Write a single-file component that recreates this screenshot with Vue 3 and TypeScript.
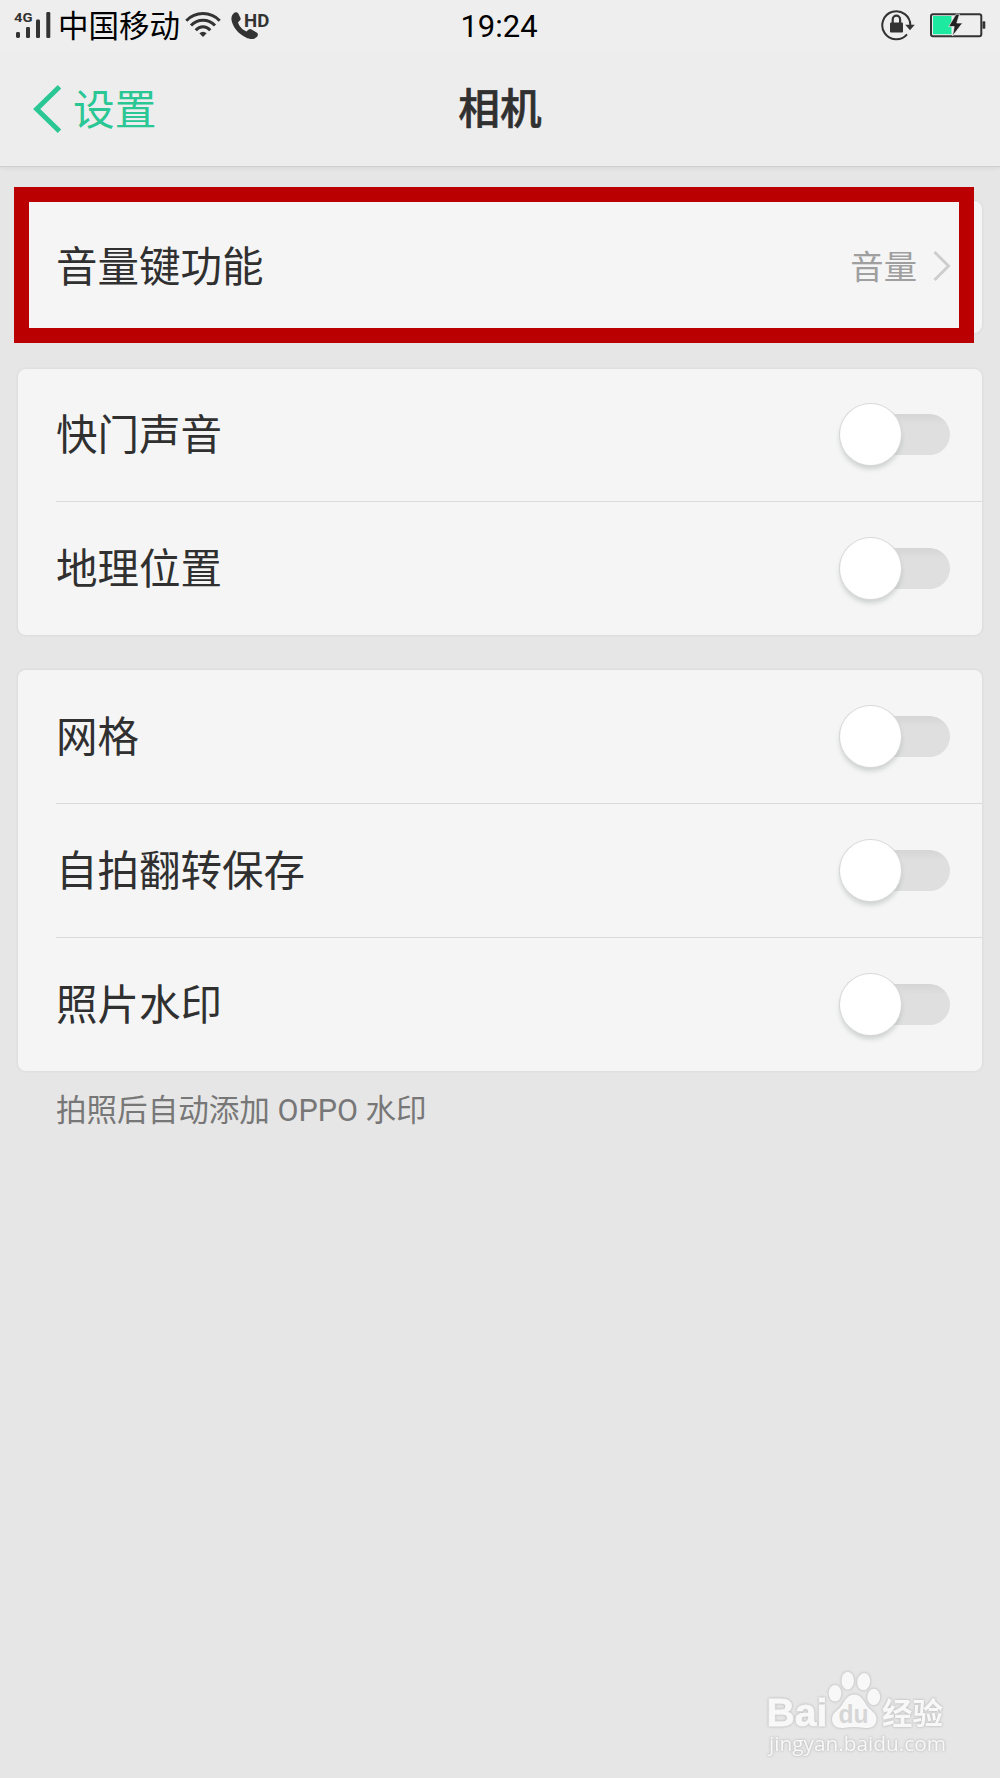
<script setup lang="ts">
interface SettingRow {
  label: string
  value?: string
  on?: boolean
}

const groups: SettingRow[][] = [
  [{ label: '音量键功能', value: '音量' }],
  [
    { label: '快门声音', on: false },
    { label: '地理位置', on: false },
  ],
  [
    { label: '网格', on: false },
    { label: '自拍翻转保存', on: false },
    { label: '照片水印', on: false },
  ],
]
</script>

<template>
  <div class="screen">
    <header class="top">
      <div class="status">
        <div class="status-left">
          <svg class="signal" width="38" height="28" viewBox="0 0 38 28">
            <text x="0" y="10" class="net" textLength="18.500" lengthAdjust="spacingAndGlyphs">4G</text>
            <g fill="#333">
              <rect x="2" y="20" width="4" height="6" rx="1.4" />
              <rect x="12" y="15" width="4" height="11" rx="1.2" />
              <rect x="22" y="7.5" width="4" height="18.500" rx="1.2" />
              <rect x="32.300" y="0" width="4" height="26" rx="1.2" />
            </g>
          </svg>
          <span class="carrier">中国移动</span>
          <svg class="wifi" width="36" height="26" viewBox="0 0 36 26">
            <g fill="none" stroke="#333" stroke-width="3">
              <path d="M1.300 8.700C10.500-.8 25.500-.8 34.700 8.700" />
              <path d="M6 13.600C12.500 6.500 23.500 6.500 30 13.600" />
              <path d="M10.700 18.200C15 13.700 21 13.700 25.300 18.200" />
            </g>
            <path d="M14.300 21.200Q18 18.200 21.700 21.200L18 25Z" fill="#333" />
          </svg>
          <svg class="call" width="40" height="28" viewBox="0 0 40 28">
            <path
              d="M2.300 1.700C4-.2 6-.2 7.300 1.400L9.600 6.300C10.200 7.700 8.300 9.200 7 10.300C8 14.500 11.500 18 15.700 19.500C16.800 18.200 18.500 16.700 20 17.200L26 20.700C27.500 21.800 27 23.700 25.400 25.300C22.500 28 18.500 27.200 15 25.500C7.500 22 2 15.500.6 8.500C.1 6 .6 3.400 2.300 1.700Z"
              fill="#333"
            />
            <text x="13" y="14.800" class="hd" textLength="25.300" lengthAdjust="spacingAndGlyphs">HD</text>
          </svg>
        </div>
        <span class="clock">19:24</span>
        <div class="status-right">
          <svg width="36" height="32" viewBox="0 0 36 32">
            <path d="M26 25.300A14 14 0 1 1 29.300 16.500" fill="none" stroke="#333" stroke-width="2" />
            <path d="M24.200 15.700H33.800L29 21.200Z" fill="#333" />
            <rect x="9" y="13.500" width="13" height="10" rx="1" fill="#333" />
            <path d="M11.700 14V10.500A3.700 3.900 0 0 1 19.100 10.500V14" fill="none" stroke="#333" stroke-width="2.200" />
          </svg>
          <svg class="battery" width="56" height="25" viewBox="0 0 56 25">
            <rect x="1" y="1.200" width="50.300" height="22" rx="2" fill="none" stroke="#333" stroke-width="2" />
            <rect x="3" y="3" width="18.500" height="18.200" fill="#1de9a0" />
            <rect x="52.500" y="8.300" width="2.800" height="7.500" rx=".8" fill="#333" />
            <path d="M26 1.200L18.600 13.600H24.200L22.500 23L32.500 10H26.800L29.500 1.200Z" fill="#222" stroke="#eee" stroke-width=".7" />
          </svg>
        </div>
      </div>
      <nav class="nav">
        <a class="back">
          <svg width="28" height="48" viewBox="0 0 28 48">
            <path d="M26.500 1.800L3.700 24L26.500 46.200" fill="none" stroke="#2ac795" stroke-width="5" />
          </svg>
          <span class="back-text">设置</span>
        </a>
        <h1>相机</h1>
      </nav>
    </header>

    <main class="list">
      <section v-for="(group, g) in groups" :key="g" class="card">
        <div v-for="row in group" :key="row.label" class="row">
          <span class="label">{{ row.label }}</span>
          <span v-if="row.value" class="value">
            <span class="value-text">{{ row.value }}</span>
            <svg width="18" height="32" viewBox="0 0 18 32">
              <path d="M1.500 2L15.500 16L1.500 30" fill="none" stroke="#cecece" stroke-width="3" />
            </svg>
          </span>
          <span v-else class="switch" role="switch" :aria-checked="row.on"><i class="knob"></i></span>
        </div>
      </section>
      <p class="hint">拍照后自动添加 OPPO 水印</p>
      <div class="highlight"></div>
    </main>

    <svg class="mark" width="200" height="94" viewBox="0 0 200 94">
      <g class="ink">
        <text x="5.500" y="56" class="bai" textLength="61" lengthAdjust="spacingAndGlyphs">Bai</text>
        <ellipse cx="74" cy="23.300" rx="6.500" ry="8.300" />
        <ellipse cx="86.700" cy="10.700" rx="6.300" ry="9" />
        <ellipse cx="102.700" cy="11.700" rx="6.500" ry="8.700" transform="rotate(8 102.700 11.700)" />
        <ellipse cx="112.700" cy="27" rx="6.500" ry="8.300" />
        <path d="M93 24.500C100 24.500 103 31 106 36C110 41 115.500 43 115.500 49C115.500 56.500 109 59 102 57.800Q93 56 84 57.800C76 59 71 55.500 71 49C71 42 77 41 81 35C84 30 87 24.500 93 24.500Z" />
        <text x="121" y="54" class="jing" textLength="61" lengthAdjust="spacingAndGlyphs">经验</text>
        <text x="8" y="80.500" class="url" textLength="177" lengthAdjust="spacingAndGlyphs">jingyan.baidu.com</text>
      </g>
      <text x="77.500" y="52.700" class="du" textLength="30" lengthAdjust="spacingAndGlyphs">du</text>
    </svg>
  </div>
</template>

<style>
body {
  background: #e6e6e6;
}
</style>

<style scoped>
.screen {
  position: relative;
  width: 1000px;
  height: 1778px;
  overflow: hidden;
  background: #e6e6e6;
  color: #303030;
  font-family: 'Noto Sans CJK SC', sans-serif;
}
.top {
  position: relative;
  box-sizing: border-box;
  height: 167px;
  background: #ededed;
  border-bottom: 1px solid #cfcfcf;
  box-shadow: 0 1px 5px rgba(0, 0, 0, 0.07);
}
.status {
  display: grid;
  grid-template-columns: 1fr auto 1fr;
  height: 51px;
  background: #eee;
  color: #000;
}
.status-left {
  display: flex;
  align-items: flex-start;
  padding: 12px 0 0 14px;
}
.signal,
.call {
  overflow: visible;
}
.net {
  font: bold 13.300px Roboto, sans-serif;
  fill: #333;
}
.carrier {
  margin: -12px 0 0 6px;
  font-size: 30.500px;
  line-height: 49px;
}
.wifi {
  margin-left: 5px;
}
.call {
  margin-left: 10px;
}
.hd {
  font: bold 19px Roboto, sans-serif;
  fill: #333;
}
.clock {
  padding-right: 2px;
  font: 31px/53px Roboto, sans-serif;
}
.status-right {
  display: flex;
  justify-content: flex-end;
  align-items: flex-start;
  padding: 9px 14px 0 0;
}
.battery {
  margin: 4px 0 0 13px;
}
.nav {
  display: grid;
  grid-template-columns: 1fr auto 1fr;
  align-items: center;
  height: 115px;
}
.back {
  display: flex;
  align-items: center;
  padding-left: 33px;
  gap: 12px;
  color: #2ac795;
  font-size: 41.670px;
  line-height: 60px;
}
.back-text {
  padding-bottom: 3px;
}
h1 {
  margin: 0;
  padding-bottom: 6px;
  font-size: 41.670px;
  line-height: 60px;
  font-weight: 500;
  -webkit-text-stroke: 0.6px currentColor;
}
.list {
  position: relative;
  padding: 34px 18px 0;
}
.card {
  margin-bottom: 35px;
  border-radius: 8px;
  background: #f5f5f5;
  box-shadow: 0 0 0 1px #dfdfdf, 0 0 0 2px #e2e2e2;
}
.card:first-child {
  margin-bottom: 36px;
}
.row {
  display: flex;
  align-items: center;
  justify-content: space-between;
  box-sizing: border-box;
  height: 132px;
  margin-left: 38px;
  padding: 0 32px 2px 0;
}
.row + .row {
  height: 134px;
  padding-bottom: 0;
  border-top: 1px solid #dadada;
}
.card:nth-child(3) .row:first-child {
  height: 133px;
  padding-bottom: 0;
}
.label {
  padding-bottom: 5px;
  font-size: 41.500px;
  line-height: 60px;
}
.value {
  display: flex;
  align-items: center;
  gap: 15px;
  margin-right: -1px;
  color: #9f9f9f;
  font-size: 33.330px;
  line-height: 48px;
}
.value-text {
  padding: 0 1px 3px 0;
}
.switch {
  position: relative;
  width: 111px;
  height: 41px;
  border-radius: 21px;
  background: linear-gradient(#d5d5d5, #dfdfdf 25%);
}
.knob {
  position: absolute;
  left: 1px;
  top: -10px;
  width: 61px;
  height: 61px;
  border-radius: 50%;
  background: #fff;
  box-shadow: 0 0 0 1px #d9d9d9, 0 4px 5px rgba(60, 80, 75, 0.22);
}
.hint {
  margin: -17px 0 0 38px;
  color: #777;
  font-family: Roboto, 'Noto Sans CJK SC', sans-serif;
  font-size: 30.560px;
  line-height: 44px;
}
.highlight {
  position: absolute;
  left: 14px;
  top: 20px;
  box-sizing: border-box;
  width: 960px;
  height: 156px;
  border: 15px solid #ba0000;
}
.mark {
  position: absolute;
  left: 761px;
  top: 1670px;
  overflow: visible;
}
.ink {
  fill: #f8f8f8;
  filter: drop-shadow(0 0 1px #bcbcbc) drop-shadow(0 0 1px #d2d2d2);
}
.bai {
  font: bold 39px 'Liberation Sans', sans-serif;
  stroke: #f8f8f8;
  stroke-width: 0.8px;
}
.jing {
  font: bold 30px 'Noto Sans CJK SC', sans-serif;
}
.url {
  font: 20.500px 'Open Sans', sans-serif;
}
.du {
  font: bold 25px 'Liberation Sans', sans-serif;
  fill: #d6d6d6;
}
</style>
